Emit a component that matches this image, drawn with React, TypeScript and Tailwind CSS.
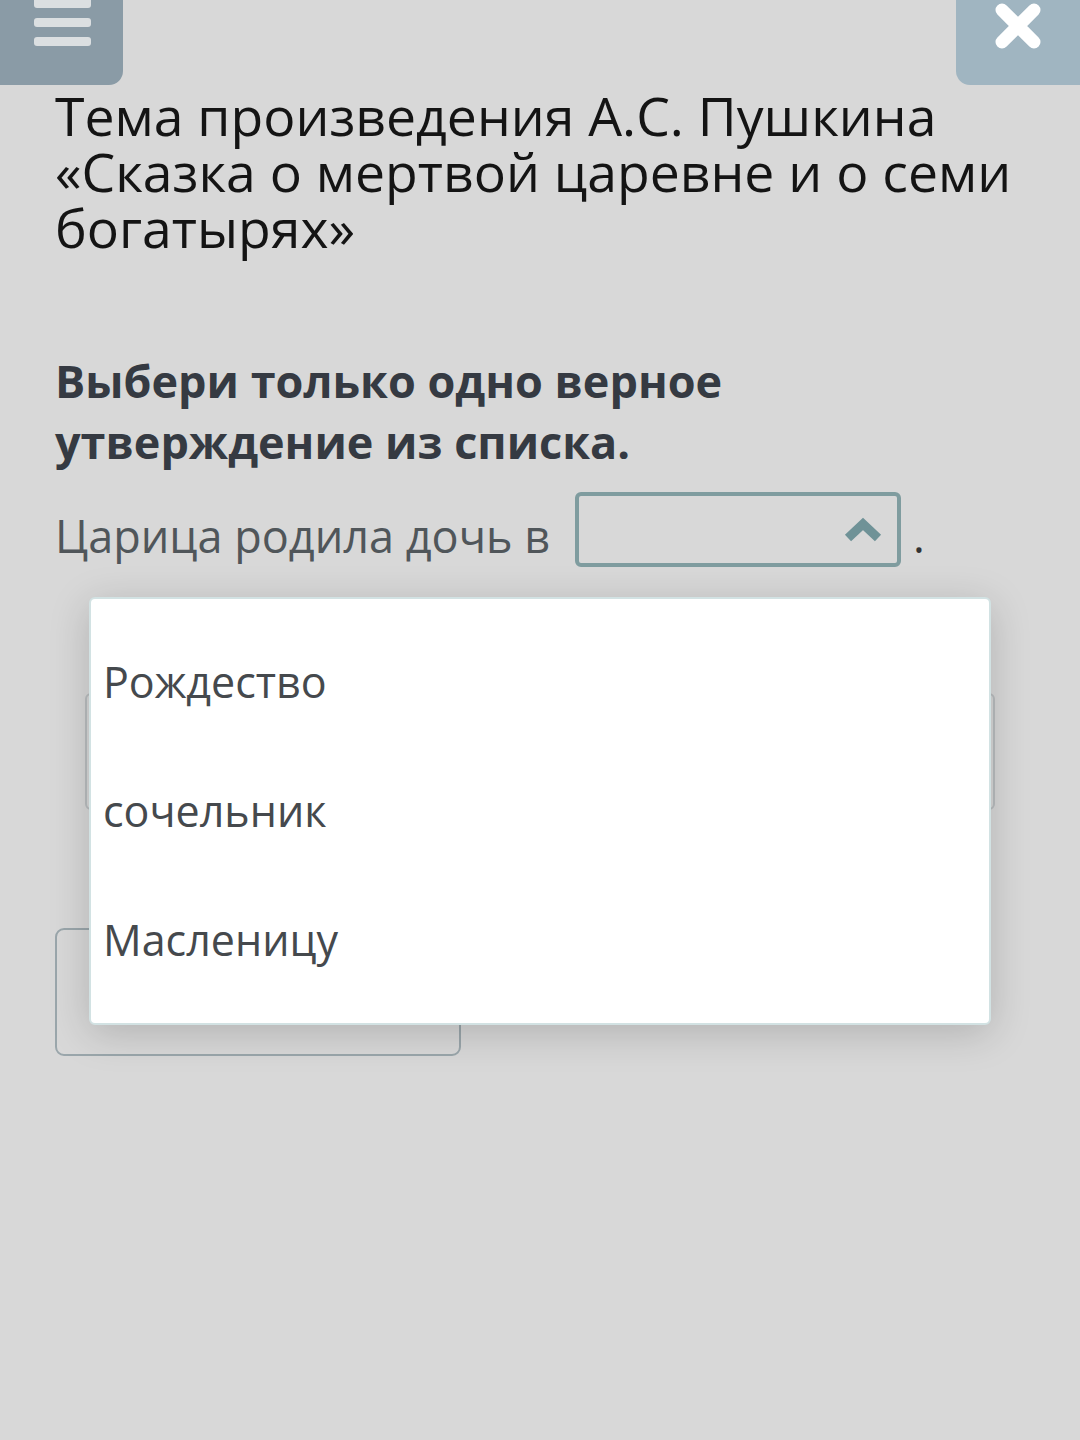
import React from "react";

export default function App() {
  const font = { fontFamily: '"Open Sans", "Noto Sans", sans-serif' };
  return (
    <div className="relative w-[1080px] h-[1440px] bg-[#d8d8d8] overflow-hidden" style={font}>
      {/* top bar */}
      <div className="flex justify-between h-[85px]">
        <div className="w-[123px] h-[85px] bg-[#8a9ba6] rounded-br-[14px] flex flex-col gap-[10px] pl-[34px]">
          <div className="w-[57px] h-[8px] bg-[#dbdfe1] rounded-b-[3px]" />
          <div className="w-[57px] h-[9px] bg-[#dbdfe1] rounded-[3px]" />
          <div className="w-[57px] h-[9px] bg-[#dbdfe1] rounded-[3px]" />
        </div>
        <div className="w-[124px] h-[85px] bg-[#a0b5c1] rounded-bl-[14px] flex justify-center pt-[3px]">
          <svg width="48" height="46" viewBox="0 0 48 46">
            <path d="M8 7 L40 39 M40 7 L8 39" stroke="#ffffff" strokeWidth="13" strokeLinecap="round" />
          </svg>
        </div>
      </div>

      <div className="pl-[55px] pr-[40px]">
        <h1 className="mt-[3px] text-[53.5px] leading-[56px] text-[#141414] font-normal">
          Тема произведения А.С. Пушкина «Сказка о мертвой царевне и о семи богатырях»
        </h1>

        <p className="mt-[94px] text-[45px] leading-[61px] font-bold text-[#353a42] w-[720px]">
          Выбери только одно верное утверждение из списка.
        </p>

        <div className="mt-[20px] flex items-start">
          <span className="mt-[13px] text-[45px] leading-[61px] text-[#50565a]">Царица родила дочь в</span>
          <div className="ml-[25px] w-[326px] h-[75px] border-[4px] border-[#7f9c9f] rounded-[6px] flex items-center justify-end pr-[14px]">
            <svg width="40" height="26" viewBox="0 0 40 26">
              <path d="M5 21 L20 7 L35 21" fill="none" stroke="#6f9297" strokeWidth="9" strokeLinejoin="miter" />
            </svg>
          </div>
          <span className="mt-[13px] ml-[12px] text-[45px] leading-[61px] text-[#333]">.</span>
        </div>

        {/* hidden content under dropdown */}
        <div className="mt-[126px] ml-[30px] w-[910px] h-[117px] border-2 border-[#b9bdbf] rounded-[6px]" />

        <div className="mt-[118px] w-[406px] h-[128px] border-2 border-[#9aa6ab] rounded-[9px]" />
      </div>

      {/* dropdown */}
      <div className="absolute left-[89px] top-[597px] w-[902px] h-[428px] bg-white rounded-[6px] border-2 border-[#d2e2e3] shadow-[0_8px_40px_rgba(0,0,0,0.18)]">
        <div className="pl-[12px] pt-[54px] text-[43px] leading-[58px] text-[#45494d]">
          <div className="h-[129px]">Рождество</div>
          <div className="h-[129px]">сочельник</div>
          <div className="h-[129px]">Масленицу</div>
        </div>
      </div>
    </div>
  );
}
